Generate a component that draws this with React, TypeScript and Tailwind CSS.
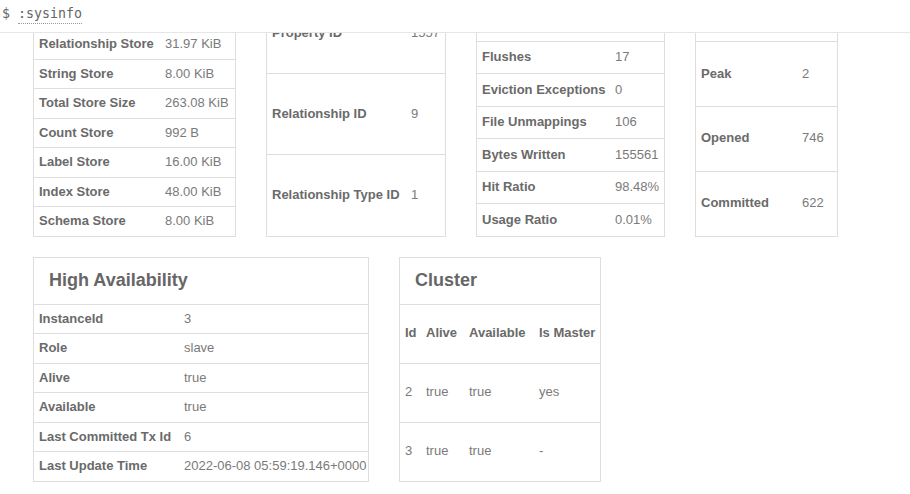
import React from "react";

type Row = [string, string];

interface CardProps {
  title: string;
  width: string;
  labelW: string;
  rows: Row[];
}

function KVCard({ title, width, labelW, rows }: CardProps) {
  return (
    <div className={`flex flex-col border border-[#dedede] bg-white ${width}`}>
      <div className="flex h-[46px] shrink-0 items-center pl-[15px] text-[18px] font-bold text-[#666]">
        {title}
      </div>
      {rows.map(([k, v]) => (
        <div
          key={k}
          className="flex flex-1 items-center border-t border-[#dedede] py-[5px] text-[13px] leading-[18.5px]"
        >
          <div className={`shrink-0 whitespace-nowrap pl-[5px] font-bold text-[#6a6a6a] ${labelW}`}>{k}</div>
          <div className="whitespace-nowrap pl-[5px] text-[#7a7a7a]">{v}</div>
        </div>
      ))}
    </div>
  );
}

const storeRows: Row[] = [
  ["Array Store", "8.00 KiB"],
  ["Logical Log", "12.57 KiB"],
  ["Node Store", "15.55 KiB"],
  ["Property Store", "48.66 KiB"],
  ["Relationship Store", "31.97 KiB"],
  ["String Store", "8.00 KiB"],
  ["Total Store Size", "263.08 KiB"],
  ["Count Store", "992 B"],
  ["Label Store", "16.00 KiB"],
  ["Index Store", "48.00 KiB"],
  ["Schema Store", "8.00 KiB"],
];

const idRows: Row[] = [
  ["Node ID", "1234"],
  ["Property ID", "1557"],
  ["Relationship ID", "9"],
  ["Relationship Type ID", "1"],
];

const cacheRows: Row[] = [
  ["Faults", "1234"],
  ["Evictions", "0"],
  ["File Mappings", "123"],
  ["Bytes Read", "456789"],
  ["Flushes", "17"],
  ["Eviction Exceptions", "0"],
  ["File Unmappings", "106"],
  ["Bytes Written", "155561"],
  ["Hit Ratio", "98.48%"],
  ["Usage Ratio", "0.01%"],
];

const txRows: Row[] = [
  ["Last Tx Id", "6"],
  ["Current", "1"],
  ["Peak", "2"],
  ["Opened", "746"],
  ["Committed", "622"],
];

const haRows: Row[] = [
  ["InstanceId", "3"],
  ["Role", "slave"],
  ["Alive", "true"],
  ["Available", "true"],
  ["Last Committed Tx Id", "6"],
  ["Last Update Time", "2022-06-08 05:59:19.146+0000"],
];

const clusterRows = [
  ["2", "true", "true", "yes"],
  ["3", "true", "true", "-"],
];

function ClusterCard() {
  const cols = ["w-[21px]", "w-[43px]", "w-[70px]", "flex-1"];
  return (
    <div className="flex w-[202px] flex-col border border-[#dedede] bg-white">
      <div className="flex h-[46px] shrink-0 items-center pl-[15px] text-[18px] font-bold text-[#666]">
        Cluster
      </div>
      <div className="flex flex-1 items-center border-t border-[#dedede] py-[5px] text-[13px] font-bold leading-[18.5px] text-[#6a6a6a]">
        {["Id", "Alive", "Available", "Is Master"].map((h, i) => (
          <div key={h} className={`shrink-0 whitespace-nowrap pl-[5px] ${cols[i]}`}>
            {h}
          </div>
        ))}
      </div>
      {clusterRows.map((r) => (
        <div
          key={r[0]}
          className="flex flex-1 items-center border-t border-[#dedede] py-[5px] text-[13px] leading-[18.5px] text-[#7a7a7a]"
        >
          {r.map((c, i) => (
            <div key={i} className={`shrink-0 whitespace-nowrap pl-[5px] ${cols[i]}`}>
              {c}
            </div>
          ))}
        </div>
      ))}
    </div>
  );
}

export default function App() {
  return (
    <div
      className="flex h-[494px] w-[910px] flex-col overflow-hidden bg-white"
      style={{ fontFamily: '"Liberation Sans", Arial, sans-serif' }}
    >
      <div
        className="relative z-10 flex h-[33px] shrink-0 items-start gap-[8px] border-b border-[#e4e6ea] bg-white pl-[2px] pt-[5px] text-[13.3px] leading-[18px] text-[#666]"
        style={{ fontFamily: '"DejaVu Sans Mono", monospace' }}
      >
        <span>$</span>
        <span className="border-b border-dotted border-[#999]">:sysinfo</span>
      </div>
      <div className="flex-1 overflow-hidden">
        <div className="-mt-[169px] pl-[33px]">
          <div className="flex items-stretch gap-[30px]">
            <KVCard title="Store Sizes" width="w-[203px]" labelW="w-[126px]" rows={storeRows} />
            <KVCard title="Id Allocation" width="w-[180px]" labelW="w-[139px]" rows={idRows} />
            <KVCard title="Page Cache" width="w-[189px]" labelW="w-[133px]" rows={cacheRows} />
            <KVCard title="Transactions" width="w-[143px]" labelW="w-[101px]" rows={txRows} />
          </div>
          <div className="mt-[20px] flex items-stretch gap-[30px]">
            <KVCard title="High Availability" width="w-[336px]" labelW="w-[145px]" rows={haRows} />
            <ClusterCard />
          </div>
        </div>
      </div>
    </div>
  );
}
